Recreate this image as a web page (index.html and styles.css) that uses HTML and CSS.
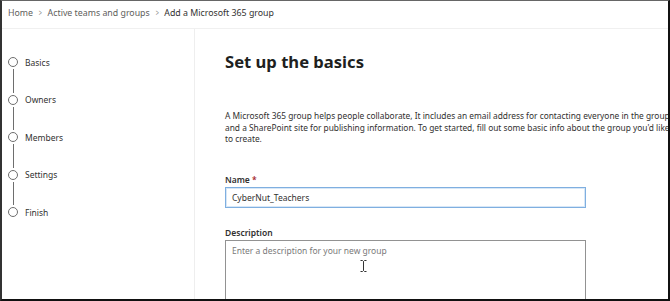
FILE: index.html
```html
<!DOCTYPE html>
<html lang="en">
<head>
<meta charset="utf-8">
<link rel="stylesheet" href="styles.css">
</head>
<body>
<div class="frame">
  <header class="crumbs">
    <span class="crumb">Home</span>
    <span class="sep">&gt;</span>
    <span class="crumb">Active teams and groups</span>
    <span class="sep">&gt;</span>
    <span class="crumb current">Add a Microsoft 365 group</span>
  </header>
  <div class="body">
    <nav class="steps">
      <div class="step"><span class="dot"></span><span class="label">Basics</span></div>
      <div class="line"></div>
      <div class="step"><span class="dot"></span><span class="label">Owners</span></div>
      <div class="line"></div>
      <div class="step"><span class="dot"></span><span class="label">Members</span></div>
      <div class="line"></div>
      <div class="step"><span class="dot"></span><span class="label">Settings</span></div>
      <div class="line"></div>
      <div class="step"><span class="dot"></span><span class="label">Finish</span></div>
    </nav>
    <main class="main">
      <h1 class="title">Set up the basics</h1>
      <p class="intro">A Microsoft 365 group helps people collaborate, It includes an email address for contacting everyone in the group,<br>and a SharePoint site for publishing information. To get started, fill out some basic info about the group you'd like<br>to create.</p>
      <label class="field-label">Name <span class="req">*</span></label>
      <div class="input focused">CyberNut_Teachers</div>
      <label class="field-label desc-label">Description</label>
      <div class="textarea">
        <span class="placeholder">Enter a description for your new group</span>
        <svg class="ibeam" width="7" height="12" viewBox="0 0 7 12"><path d="M0.5 0.5h2l1 1 1-1h2M3.5 1.5v9M0.5 11.5h2l1-1 1 1h2" fill="none" stroke="#333" stroke-width="1"/></svg>
      </div>
    </main>
  </div>
</div>
</body>
</html>
```
FILE: styles.css
```css
html, body {
  margin: 0;
  padding: 0;
  background: #fff;
}
.frame {
  width: 670px;
  height: 301px;
  box-sizing: border-box;
  border-top: 1px solid #666;
  border-left: 2px solid #333;
  border-right: 2px solid #111;
  border-bottom: 2px solid #111;
  overflow: hidden;
  font-family: "Noto Sans", "Open Sans", sans-serif;
  color: #323130;
  display: flex;
  flex-direction: column;
}
.crumbs {
  height: 28px;
  flex: 0 0 28px;
  border-bottom: 1px solid #f0f0f0;
  display: flex;
  align-items: center;
  padding-left: 6px;
  padding-bottom: 4px;
  box-sizing: border-box;
  font-size: 8.8px;
  color: #605e5c;
  gap: 5px;
  white-space: nowrap;
}
.crumbs .current { color: #323130; }
.crumbs .sep { font-size: 8px; color: #8a8886; transform: scaleX(0.7); }
.body {
  flex: 1;
  display: flex;
  min-height: 0;
}
.steps {
  width: 193px;
  flex: 0 0 193px;
  border-right: 1px solid #eeeeee;
  padding: 28px 0 0 6px;
  box-sizing: border-box;
  display: flex;
  flex-direction: column;
}
.step {
  display: flex;
  align-items: center;
  height: 10px;
  gap: 7px;
}
.dot {
  width: 10px;
  height: 10px;
  box-sizing: border-box;
  border: 1.5px solid #6e6e6e;
  border-radius: 50%;
  flex: 0 0 10px;
}
.label {
  font-size: 8.5px;
  color: #323130;
}
.line {
  width: 1px;
  height: 23.5px;
  margin: 2px 0 2px 4.5px;
  background: #6e6e6e;
}
.main {
  flex: 1;
  padding-left: 30px;
  min-width: 0;
  white-space: nowrap;
}
.title {
  margin: 21px 0 0 0;
  font-size: 16.6px;
  font-weight: 700;
  line-height: 24px;
  color: #201f1e;
}
.intro {
  margin: 36px 0 0 0;
  font-size: 8.35px;
  line-height: 11.6px;
  color: #323130;
}
.field-label {
  display: block;
  font-size: 8.5px;
  font-weight: 600;
  line-height: 12px;
  margin-top: 29px;
  color: #323130;
}
.req { color: #a4262c; }
.input {
  width: 361px;
  height: 21px;
  box-sizing: border-box;
  margin-top: 1px;
  border: 1px solid #7fafe0;
  box-shadow: inset 0 0 0 1px #d7e7f7;
  padding: 0 6px;
  font-size: 8.5px;
  line-height: 19px;
  color: #323130;
}
.desc-label { margin-top: 19px; }
.textarea {
  position: relative;
  width: 361px;
  height: 70px;
  box-sizing: border-box;
  margin-top: 1px;
  border: 1px solid #929292;
  padding: 4px 6px;
  font-size: 8.5px;
  line-height: 12px;
}
.placeholder { color: #7a7a7a; }
.ibeam {
  position: absolute;
  left: 134px;
  top: 19px;
}
```
